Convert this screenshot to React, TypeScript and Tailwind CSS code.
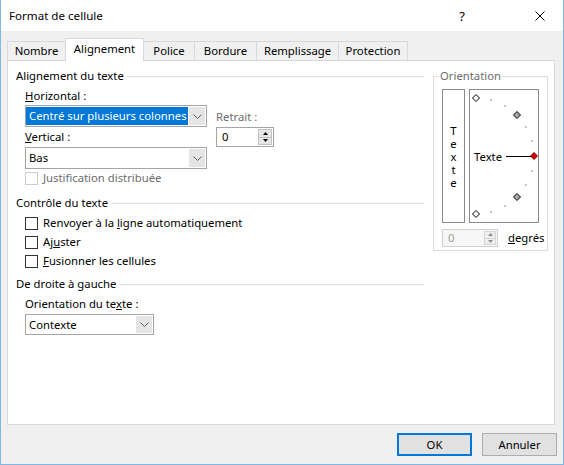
import React from "react";

const Chevron = ({ color = "#5a5a5a" }: { color?: string }) => (
  <svg width="9" height="5" viewBox="0 0 9 5">
    <polyline points="0.5,0.5 4.5,4.5 8.5,0.5" fill="none" stroke={color} strokeWidth="1" />
  </svg>
);

const Tri = ({ up, color = "#000" }: { up?: boolean; color?: string }) => (
  <svg width="5" height="3" viewBox="0 0 5 3">
    <polygon points={up ? "0,3 5,3 2.5,0" : "0,0 5,0 2.5,3"} fill={color} />
  </svg>
);

const DropButton = () => (
  <div className="w-[16px] my-px mr-px bg-[#e5e5e5] flex items-center justify-center">
    <Chevron />
  </div>
);

const Checkbox = ({ children, disabled }: { children: React.ReactNode; disabled?: boolean }) => (
  <div className="flex items-center h-[16px]">
    <div
      className={
        disabled
          ? "w-[13px] h-[13px] border border-[#cccccc] bg-white"
          : "w-[13px] h-[13px] border border-[#333333] bg-white"
      }
    />
    <span className={disabled ? "ml-[5px] text-[#6d6d6d] whitespace-nowrap" : "ml-[5px] whitespace-nowrap"}>{children}</span>
  </div>
);

const Header = ({ children }: { children: React.ReactNode }) => (
  <div className="flex items-center h-[16px]">
    <span className="whitespace-nowrap">{children}</span>
    <div className="flex-1 h-px bg-[#dcdcdc] ml-[3px]" />
  </div>
);

const Dial = () => {
  const cx = 6;
  const cy = 66;
  const r = 58;
  const pt = (deg: number) => {
    const a = (deg * Math.PI) / 180;
    return [cx + r * Math.cos(a), cy - r * Math.sin(a)];
  };
  const dots = [75, 60, 30, 15, -15, -30, -60, -75];
  const diamond = (deg: number, fill: string, stroke: string) => {
    const [x, y] = pt(deg);
    const s = 3.5;
    return (
      <polygon
        key={deg}
        points={`${x},${y - s} ${x + s},${y} ${x},${y + s} ${x - s},${y}`}
        fill={fill}
        stroke={stroke}
        strokeWidth="1"
      />
    );
  };
  return (
    <div className="relative w-[70px] h-[134px] border border-[#8c8c8c] bg-white ml-[4px]">
      <svg className="absolute left-0 top-0" width="68" height="132" viewBox="0 0 68 132">
        {dots.map((d) => {
          const [x, y] = pt(d);
          return <rect key={d} x={Math.round(x) - 1} y={Math.round(y) - 1} width="2" height="2" fill="#c4c4c4" />;
        })}
        <line x1="36" y1="66.5" x2="62" y2="66.5" stroke="#000" strokeWidth="1" />
        {diamond(90, "#ffffff", "#000")}
        {diamond(-90, "#ffffff", "#000")}
        {diamond(45, "#a8a8a8", "#000")}
        {diamond(-45, "#a8a8a8", "#000")}
        {diamond(0, "#d40000", "#8a0000")}
      </svg>
      <span className="absolute left-[4px] top-[59px] leading-[16px]">Texte</span>
    </div>
  );
};

export default function App() {
  const tabs = ["Nombre", "Alignement", "Police", "Bordure", "Remplissage", "Protection"];
  const widths = ["w-[58px]", "w-[79px]", "w-[50px]", "w-[62px]", "w-[82px]", "w-[70px]"];
  return (
    <div className="w-[564px] h-[465px] flex flex-col bg-[#f0f0f0] border-l border-r border-b border-[#7db8e8] font-['Segoe_UI','Noto_Sans',sans-serif] text-[11.3px] leading-[16px] text-black">
      {/* Title bar */}
      <div className="h-[31px] bg-white flex items-center pl-[8px] shrink-0">
        <span className="text-[11.6px]">Format de cellule</span>
        <div className="ml-auto flex items-center gap-[32px] h-full">
          <div className="w-[46px] h-full flex items-center justify-center text-[13px]">?</div>
          <div className="w-[46px] h-full flex items-center justify-center">
            <svg width="10" height="10" viewBox="0 0 10 10">
              <path d="M0.5 0.5 L9.5 9.5 M9.5 0.5 L0.5 9.5" stroke="#000" strokeWidth="1" fill="none" />
            </svg>
          </div>
        </div>
      </div>

      {/* Tabs */}
      <div className="pt-[7px] pl-[6px] flex items-end h-[30px] -mb-px relative z-10 shrink-0">
        {tabs.map((t, i) => {
          const sel = i === 1;
          return (
            <div
              key={t}
              className={
                (sel
                  ? "h-[23px] pb-[2px] bg-white border-t border-l border-r border-[#d9d9d9] "
                  : "h-[19px] mb-px bg-[#f0f0f0] border-t border-l border-[#d9d9d9] ") +
                (i === tabs.length - 1 ? "border-r " : "") +
                (i === 2 ? "border-l-0 " : "") +
                widths[i] +
                " flex items-center justify-center whitespace-nowrap"
              }
            >
              {t}
            </div>
          );
        })}
      </div>

      {/* Panel */}
      <div className="ml-[6px] w-[548px] h-[365px] bg-white border border-[#d9d9d9] pl-[8px] pt-[7px] flex shrink-0">
        {/* Left column */}
        <div className="w-[408px] flex flex-col">
          <Header>Alignement du texte</Header>
          <div className="flex ml-[9px] mt-[4px]">
            <div className="flex flex-col w-[182px]">
              <div className="h-[16px]">
                <span className="underline">H</span>orizontal :
              </div>
              <div className="mt-[1px] flex h-[22px] w-[182px] border border-[#a5a5a5] bg-white">
                <div className="flex-1 flex">
                  <div className="flex-1 my-px mr-px bg-[#0078d7] text-white pl-[3px] flex items-center whitespace-nowrap overflow-hidden">
                    Centré sur plusieurs colonnes
                  </div>
                </div>
                <DropButton />
              </div>
              <div className="mt-[2px] h-[16px]">
                <span className="underline">V</span>ertical :
              </div>
              <div className="mt-[2px] flex h-[22px] w-[182px] border border-[#a5a5a5] bg-white">
                <div className="flex-1 pl-[3px] flex items-center">Bas</div>
                <DropButton />
              </div>
            </div>
            <div className="flex flex-col ml-[9px]">
              <div className="mt-[21px] h-[16px] text-[#6d6d6d] whitespace-nowrap">Retrait :</div>
              <div className="mt-[2px] flex h-[20px] w-[58px] border border-[#a5a5a5] bg-white">
                <div className="flex-1 pl-[5px] flex items-center">0</div>
                <div className="w-[14px] my-px mr-px flex flex-col">
                  <div className="flex-1 bg-[#e6e6e6] border border-[#c2c2c2] flex items-center justify-center">
                    <Tri up />
                  </div>
                  <div className="flex-1 bg-[#e6e6e6] border border-[#c2c2c2] border-t-0 flex items-center justify-center">
                    <Tri />
                  </div>
                </div>
              </div>
            </div>
          </div>
          <div className="ml-[9px] mt-[1px]">
            <Checkbox disabled>Justification distribuée</Checkbox>
          </div>

          <div className="mt-[9px]">
            <Header>Contrôle du texte</Header>
          </div>
          <div className="ml-[9px] mt-[4px] flex flex-col gap-[3px]">
            <Checkbox>
              Renvoyer à la <span className="underline">l</span>igne automatiquement
            </Checkbox>
            <Checkbox>
              Aj<span className="underline">u</span>ster
            </Checkbox>
            <Checkbox>
              <span className="underline">F</span>usionner les cellules
            </Checkbox>
          </div>

          <div className="mt-[7px]">
            <Header>De droite à gauche</Header>
          </div>
          <div className="ml-[9px] mt-[4px] h-[16px]">
            Orientation du te<span className="underline">x</span>te :
          </div>
          <div className="ml-[9px] mt-[2px] flex h-[21px] w-[129px] border border-[#a5a5a5] bg-white">
            <div className="flex-1 pl-[3px] flex items-center">Contexte</div>
            <DropButton />
          </div>
        </div>

        {/* Right column: Orientation */}
        <div className="ml-[9px] mt-[8px] w-[115px] h-[175px] border border-[#dcdcdc] relative pl-[8px] pt-[12px]">
          <span className="absolute left-[5px] -top-[9px] bg-white px-px text-[#6d6d6d]">Orientation</span>
          <div className="flex">
            <div className="w-[23px] h-[134px] border border-[#8c8c8c] bg-white flex flex-col items-center justify-center leading-[13px]">
              <span>T</span>
              <span>e</span>
              <span>x</span>
              <span>t</span>
              <span>e</span>
            </div>
            <Dial />
          </div>
          <div className="flex items-center mt-[6px]">
            <div className="flex h-[18px] w-[56px] border border-[#d0d0d0] bg-[#f7f7f7]">
              <div className="flex-1 pl-[5px] flex items-center text-[#9a9a9a]">0</div>
              <div className="w-[12px] my-px mr-px flex flex-col">
                <div className="flex-1 bg-[#efefef] border border-[#d6d6d6] flex items-center justify-center">
                  <Tri up color="#8a8a8a" />
                </div>
                <div className="flex-1 bg-[#efefef] border border-[#d6d6d6] border-t-0 flex items-center justify-center">
                  <Tri color="#8a8a8a" />
                </div>
              </div>
            </div>
            <span className="ml-[10px] whitespace-nowrap">
              <span className="underline">d</span>egrés
            </span>
          </div>
        </div>
      </div>

      {/* Buttons */}
      <div className="mt-[8px] flex justify-end pr-[6px] gap-[10px]">
        <div className="w-[75px] h-[23px] bg-[#e1e1e1] border-2 border-[#0078d7] flex items-center justify-center">
          OK
        </div>
        <div className="w-[75px] h-[23px] bg-[#e1e1e1] border border-[#adadad] flex items-center justify-center">
          Annuler
        </div>
      </div>
    </div>
  );
}
